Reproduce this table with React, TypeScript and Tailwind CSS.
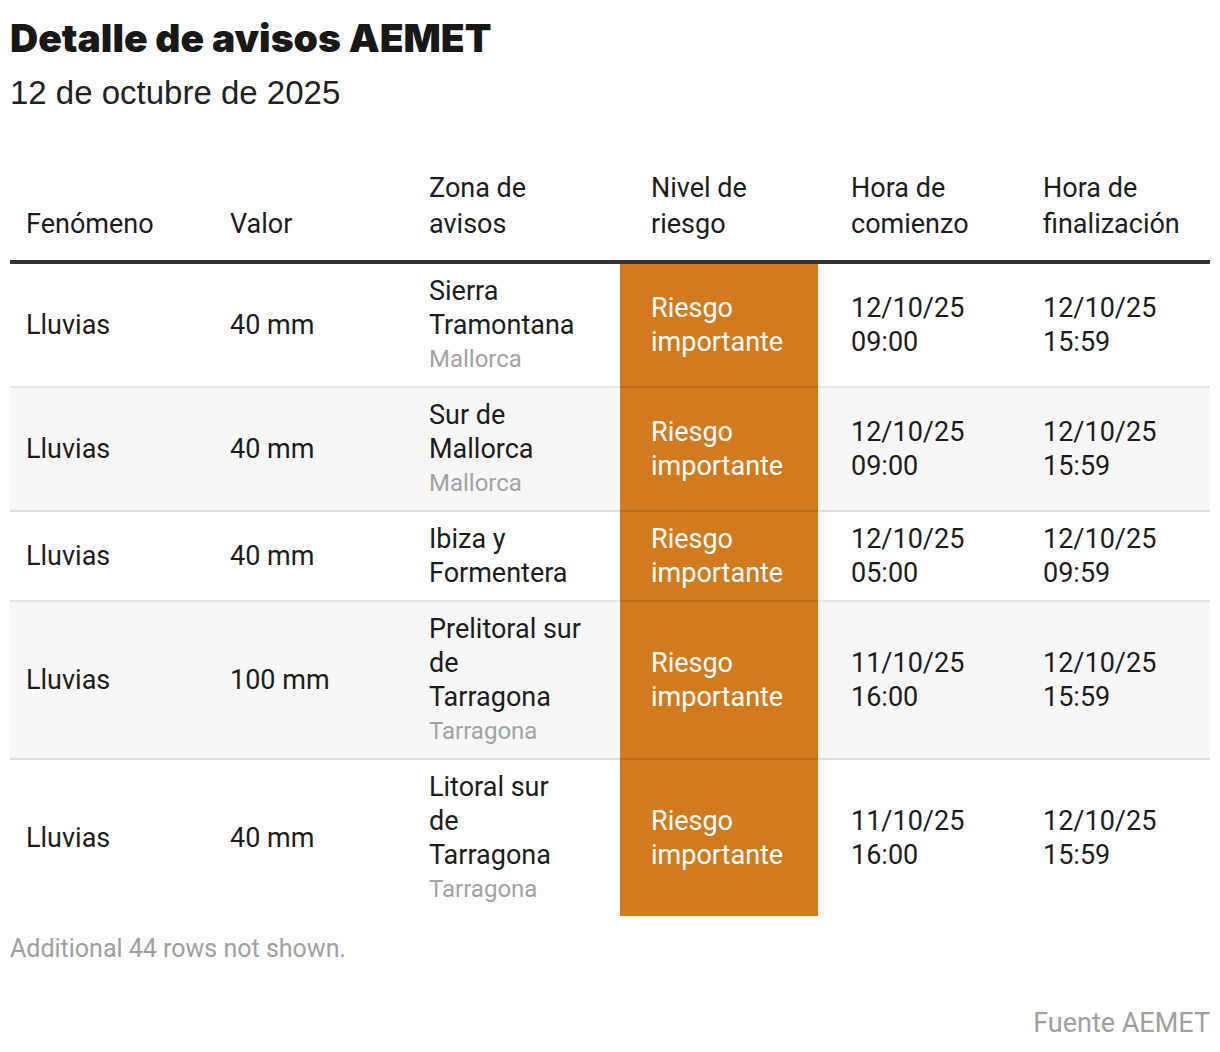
import React from "react";

interface Aviso {
  fenomeno: string;
  valor: string;
  zona: string[];
  region?: string;
  nivel: string[];
  comienzo: string[];
  fin: string[];
}

const avisos: Aviso[] = [
  {
    fenomeno: "Lluvias",
    valor: "40 mm",
    zona: ["Sierra", "Tramontana"],
    region: "Mallorca",
    nivel: ["Riesgo", "importante"],
    comienzo: ["12/10/25", "09:00"],
    fin: ["12/10/25", "15:59"],
  },
  {
    fenomeno: "Lluvias",
    valor: "40 mm",
    zona: ["Sur de", "Mallorca"],
    region: "Mallorca",
    nivel: ["Riesgo", "importante"],
    comienzo: ["12/10/25", "09:00"],
    fin: ["12/10/25", "15:59"],
  },
  {
    fenomeno: "Lluvias",
    valor: "40 mm",
    zona: ["Ibiza y", "Formentera"],
    nivel: ["Riesgo", "importante"],
    comienzo: ["12/10/25", "05:00"],
    fin: ["12/10/25", "09:59"],
  },
  {
    fenomeno: "Lluvias",
    valor: "100 mm",
    zona: ["Prelitoral sur", "de", "Tarragona"],
    region: "Tarragona",
    nivel: ["Riesgo", "importante"],
    comienzo: ["11/10/25", "16:00"],
    fin: ["12/10/25", "15:59"],
  },
  {
    fenomeno: "Lluvias",
    valor: "40 mm",
    zona: ["Litoral sur", "de", "Tarragona"],
    region: "Tarragona",
    nivel: ["Riesgo", "importante"],
    comienzo: ["11/10/25", "16:00"],
    fin: ["12/10/25", "15:59"],
  },
];

const Lines = ({ lines }: { lines: string[] }) => (
  <>
    {lines.map((l, i) => (
      <div key={i}>{l}</div>
    ))}
  </>
);

const App = () => {
  return (
    <div
      className="w-[1220px] min-h-[1052px] bg-white px-[10px] text-[#1d1d1d]"
      style={{ fontFamily: "Roboto, 'Liberation Sans', sans-serif" }}
    >
      {/* Title block */}
      <div className="pt-[13px]">
        <h1
          className="text-[39px] leading-[50px] font-black text-[#181818]"
          style={{ fontFamily: "Inter, Roboto, sans-serif" }}
        >
          Detalle de avisos AEMET
        </h1>
        <p
          className="mt-[11px] text-[33px] leading-[38px] text-[#222]"
          style={{ fontFamily: "'Liberation Sans', sans-serif" }}
        >
          12 de octubre de 2025
        </p>
      </div>

      {/* Table */}
      <div className="mt-[58px] text-[27px]">
        <div className="grid grid-cols-[204px_199px_207px_198px_209px_183px] items-end border-b-[4px] border-[#333] pb-[18px] leading-[36px]">
          <div className="pl-4">Fenómeno</div>
          <div className="pl-4">Valor</div>
          <div className="pl-4">
            <div>Zona de</div>
            <div>avisos</div>
          </div>
          <div className="pl-[31px]">
            <div>Nivel de</div>
            <div>riesgo</div>
          </div>
          <div className="pl-[33px]">
            <div>Hora de</div>
            <div>comienzo</div>
          </div>
          <div className="pl-4">
            <div>Hora de</div>
            <div>finalización</div>
          </div>
        </div>

        {avisos.map((a, i) => {
          const last = i === avisos.length - 1;
          const rowBg = i % 2 === 1 ? "bg-[#f7f7f7]" : "bg-white";
          const cell = `flex flex-col justify-center py-[10px] leading-[34px] ${
            last ? "" : "border-b-2 border-black/10"
          }`;
          return (
            <div
              key={i}
              className="grid grid-cols-[204px_199px_207px_198px_209px_183px]"
            >
              <div className={`${cell} ${rowBg} pl-4`}>{a.fenomeno}</div>
              <div className={`${cell} ${rowBg} pl-4`}>{a.valor}</div>
              <div className={`${cell} ${rowBg} pl-4`}>
                <Lines lines={a.zona} />
                {a.region && (
                  <div className="text-[24px] text-[#a3a3a3]">{a.region}</div>
                )}
              </div>
              <div className={`${cell} bg-[#d17b1e] pl-[31px] text-white`}>
                <Lines lines={a.nivel} />
              </div>
              <div className={`${cell} ${rowBg} pl-[33px]`}>
                <Lines lines={a.comienzo} />
              </div>
              <div className={`${cell} ${rowBg} pl-4`}>
                <Lines lines={a.fin} />
              </div>
            </div>
          );
        })}
      </div>

      {/* Footer */}
      <div className="mt-[17px] text-[25px] leading-[32px] text-[#a0a0a0]">
        Additional 44 rows not shown.
      </div>
      <div className="mt-[42px] text-right text-[27px] leading-[32px] text-[#a0a0a0]">
        Fuente AEMET
      </div>
    </div>
  );
};

export default App;
